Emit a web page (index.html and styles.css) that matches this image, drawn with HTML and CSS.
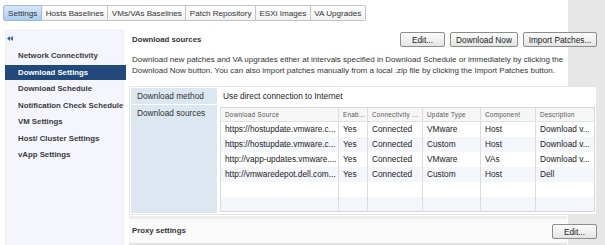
FILE: index.html
```html
<!DOCTYPE html>
<html>
	<head>
		<meta charset="utf-8">
		<title>Update Manager - Settings</title>
		<link rel="stylesheet" href="styles.css">
	</head>
	<body>
		<div class="tabs">
			<span class="tab active">Settings</span>
			<span class="tab">Hosts Baselines</span>
			<span class="tab">VMs/VAs Baselines</span>
			<span class="tab">Patch Repository</span>
			<span class="tab">ESXi Images</span>
			<span class="tab">VA Upgrades</span>
		</div>
		<div class="layout">
			<aside class="sidebar">
				<div class="collapse">
					<svg width="6" height="5" viewBox="0 0 6 5"><path d="M3 0 L0 2.5 L3 5 Z M6 0 L3 2.5 L6 5 Z" fill="#2f66a8"/></svg>
				</div>
				<ul class="nav">
					<li>Network Connectivity</li>
					<li class="selected">Download Settings</li>
					<li>Download Schedule</li>
					<li>Notification Check Schedule</li>
					<li>VM Settings</li>
					<li>Host/ Cluster Settings</li>
					<li>vApp Settings</li>
				</ul>
			</aside>
			<main class="content">
				<section class="block">
					<div class="block-head">
						<h2>Download sources</h2>
						<div class="actions">
							<button class="btn w-edit">Edit...</button>
							<button class="btn w-now">Download Now</button>
							<button class="btn w-import">Import Patches...</button>
						</div>
					</div>
					<p class="desc">Download new patches and VA upgrades either at intervals specified in Download Schedule or immediately by clicking the Download Now button. You can also import patches manually from a local .zip file by clicking the Import Patches button.</p>
					<div class="props">
						<div class="prop-label">Download method</div>
						<div class="prop-value">Use direct connection to Internet</div>
						<div class="prop-label">Download sources</div>
						<div class="prop-value grid-cell">
							<table class="grid">
								<colgroup>
									<col style="width:118px"><col style="width:29px"><col style="width:55px"><col style="width:58px"><col style="width:55px"><col>
								</colgroup>
								<thead>
									<tr><th>Download Source</th><th>Enab...</th><th>Connectivity ...</th><th>Update Type</th><th>Component</th><th>Description</th></tr>
								</thead>
								<tbody>
									<tr><td>https://hostupdate.vmware.c...</td><td>Yes</td><td>Connected</td><td>VMware</td><td>Host</td><td>Download v...</td></tr>
									<tr><td>https://hostupdate.vmware.c...</td><td>Yes</td><td>Connected</td><td>Custom</td><td>Host</td><td>Download v...</td></tr>
									<tr><td>http://vapp-updates.vmware....</td><td>Yes</td><td>Connected</td><td>VMware</td><td>VAs</td><td>Download v...</td></tr>
									<tr><td>http://vmwaredepot.dell.com...</td><td>Yes</td><td>Connected</td><td>Custom</td><td>Host</td><td>Dell</td></tr>
									<tr><td></td><td></td><td></td><td></td><td></td><td></td></tr>
									<tr><td></td><td></td><td></td><td></td><td></td><td></td></tr>
								</tbody>
							</table>
						</div>
					</div>
				</section>
				<section class="block proxy">
					<div class="block-head">
						<h2>Proxy settings</h2>
						<div class="actions">
							<button class="btn w-edit">Edit...</button>
						</div>
					</div>
				</section>
			</main>
		</div>
	</body>
</html>
```

FILE: styles.css
```css
html, body{
	margin: 0;
	height: 100%;
}
body{
	background: linear-gradient(to right, #fff 568px, #e7e7e7 568px);
	font-family: "Liberation Sans", Arial, sans-serif;
	font-size: 8.3px;
	color: #333;
	overflow: hidden;
}
.tabs{
	display: flex;
	margin: 5px 0 0 3px;
	height: 16px;
}
.tab{
	display: flex;
	align-items: center;
	padding: 0 3.5px;
	height: 14px;
	border: 1px solid #c4c4c4;
	border-left: none;
	background: linear-gradient(#fff, #f1f1f1);
	font-size: 8.1px;
	color: #333;
}
.tab:first-child{
	border-left: 1px solid #b8c8da;
	border-radius: 2px 0 0 2px;
	padding: 0 4px;
}
.tab:last-child{
	border-radius: 0 2px 2px 0;
}
.tab.active{
	background: linear-gradient(#d7e8fa, #a9cbf1);
	border-color: #9fb9d6;
}
.layout{
	display: flex;
	margin-top: 9px;
}
.sidebar{
	margin-left: 5px;
	width: 119px;
	height: 215px;
	background: #f5f6fd;
	border: 1px solid #eceef6;
	border-bottom: none;
	padding-top: 5px;
	box-sizing: border-box;
}
.collapse{
	height: 10px;
	padding-left: 1px;
}
.collapse svg{
	display: block;
}
.nav{
	list-style: none;
	margin: 2px 0 0 -1px;
	padding: 0;
	width: 121px;
}
.nav li{
	height: 16.5px;
	line-height: 16.5px;
	padding-left: 13px;
	font-weight: bold;
	font-size: 7.8px;
	color: #3a3a3a;
	white-space: nowrap;
}
.nav li.selected{
	background: #21497b;
	color: #fff;
	height: 15px;
	line-height: 15px;
	margin: 0.75px 0;
}
.content{
	margin-left: 5px;
	width: 468px;
}
.block-head{
	display: flex;
	justify-content: space-between;
	align-items: center;
	height: 18px;
}
.block-head h2{
	margin: 0 0 0 3px;
	font-size: 7.8px;
	font-weight: bold;
	color: #333;
}
.actions{
	display: flex;
	gap: 5px;
	padding-top: 1px;
}
.btn{
	height: 15px;
	padding: 0;
	border: 1px solid #8d8d8d;
	border-radius: 2px;
	background: linear-gradient(#fdfdfd, #e4e4e4);
	font-family: "Liberation Sans", Arial, sans-serif;
	font-size: 8.3px;
	color: #222;
}
.w-edit{ width: 45px; }
.w-now{ width: 68px; }
.w-import{ width: 74px; }
.desc{
	margin: 7px 0 0 3px;
	width: 445px;
	font-size: 8px;
	line-height: 10.5px;
	color: #333;
}
.props{
	display: grid;
	grid-template-columns: 86px 1fr;
	grid-template-rows: 16px 108px;
	gap: 1px;
	margin-top: 10px;
	padding: 1px;
	border: 1px solid #e6e6e6;
	background: #fff;
}
.prop-label{
	background: #dde7f2;
	padding: 0 0 0 6px;
	line-height: 16px;
	font-size: 8.3px;
	color: #333;
}
.prop-value{
	padding-left: 5px;
	line-height: 16px;
	font-size: 8.3px;
	color: #222;
}
.prop-value.grid-cell{
	padding: 2px 0 0 2px;
	line-height: normal;
}
.grid{
	border-collapse: collapse;
	table-layout: fixed;
	width: 375px;
	border: 1px solid #d6d6d6;
}
.grid tr{
	height: 15px;
}
.grid thead tr{
	height: 14px;
}
.grid th, .grid td{
	line-height: 12px;
	padding: 0 0 0 4px;
	border-left: 1px solid #dcdcdc;
	text-align: left;
	white-space: nowrap;
	overflow: hidden;
}
.grid th{
	background: #f6f6f6;
	border-bottom: 1px solid #e2e2e2;
	font-weight: normal;
	font-size: 6.3px;
	letter-spacing: 0.3px;
	color: #555;
}
.grid td{
	font-size: 8.3px;
	color: #222;
}
.grid tbody tr:nth-child(even){
	background: #f4f6fc;
}
.proxy{
	margin-top: 1px;
	padding: 3px 0 2px;
	background:
		linear-gradient(#eeeeee, #eeeeee) top left / 438px 3px no-repeat,
		linear-gradient(#e3e3e3, #e3e3e3) bottom left / 438px 2px no-repeat,
		linear-gradient(#fbfafa, #fbfafa) left / 438px 100% no-repeat;
}
.proxy .block-head{
	height: 24px;
	align-items: flex-start;
}
.proxy h2{
	margin-top: 7px;
}
.proxy .actions{
	padding-top: 5px;
}
```
